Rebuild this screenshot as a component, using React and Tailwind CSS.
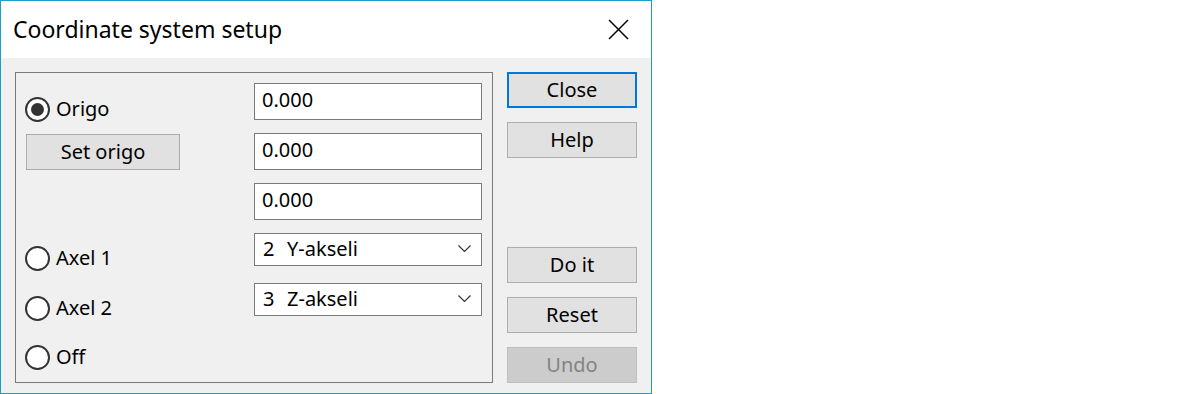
import React from 'react';

const font = { fontFamily: '"Noto Sans", "Open Sans", sans-serif' };

const Radio = ({ checked, label }) => (
  <div className="flex items-center h-[26px]">
    <span className="w-[25px] h-[25px] rounded-full border-2 border-[#333333] bg-white flex items-center justify-center">
      {checked && <span className="w-[13px] h-[13px] rounded-full bg-[#333333]" />}
    </span>
    <span className="ml-[6px] text-[20px] text-black leading-none">{label}</span>
  </div>
);

const Btn = ({ children, primary, disabled, className = '' }) => (
  <button
    className={`w-[130px] h-[36px] text-[20px] leading-none ${
      primary
        ? 'border-2 border-[#0078d7] bg-[#e1e1e1] text-black'
        : disabled
        ? 'border border-[#bfbfbf] bg-[#cccccc] text-[#838383]'
        : 'border border-[#adadad] bg-[#e1e1e1] text-black'
    } ${className}`}
  >
    {children}
  </button>
);

const Field = ({ value, className = '' }) => (
  <div className={`w-[228px] h-[37px] border border-[#7a7a7a] bg-white flex items-center px-[7px] pb-[3px] text-[20px] text-black ${className}`}>
    {value}
  </div>
);

const Select = ({ num, label, className = '' }) => (
  <div className={`w-[228px] h-[33px] border border-[#7a7a7a] bg-white flex items-center pl-[8px] pr-[10px] pb-[1px] text-[20px] text-black ${className}`}>
    <span className="w-[24px]">{num}</span>
    <span className="flex-1">{label}</span>
    <svg width="13" height="8" viewBox="0 0 13 8" fill="none">
      <path d="M0.5 0.5 L6.5 6.5 L12.5 0.5" stroke="#333" strokeWidth="1.2" />
    </svg>
  </div>
);

export default function App() {
  return (
    <div className="w-[1200px] h-[394px] bg-white" style={font}>
      <div className="w-[652px] h-[394px] border border-[#1aa0c8] flex flex-col">
        <div className="h-[57px] bg-white flex items-center justify-between pl-[12px] pr-[22px] shrink-0">
          <span className="text-[23px] text-black">Coordinate system setup</span>
          <svg width="21" height="21" viewBox="0 0 21 21" fill="none">
            <path d="M1 1 L20 20 M20 1 L1 20" stroke="#000" strokeWidth="1.5" />
          </svg>
        </div>
        <div className="flex-1 bg-[#f0f0f0] flex pt-[14px] pl-[14px] pr-[13px]">
          <div className="w-[478px] h-[311px] border border-[#7a7a7a] flex">
            <div className="w-[238px] pl-[9px] flex flex-col">
              <div className="mt-[23px]"><Radio checked label="Origo" /></div>
              <button className="mt-[12px] ml-[1px] w-[154px] h-[36px] border border-[#adadad] bg-[#e1e1e1] text-[20px] text-black leading-none">
                Set origo
              </button>
              <div className="mt-[75px]"><Radio label="Axel 1" /></div>
              <div className="mt-[24px]"><Radio label="Axel 2" /></div>
              <div className="mt-[23px]"><Radio label="Off" /></div>
            </div>
            <div className="flex flex-col pt-[10px]">
              <Field value="0.000" />
              <Field value="0.000" className="mt-[13px]" />
              <Field value="0.000" className="mt-[13px]" />
              <Select num="2" label="Y-akseli" className="mt-[13px]" />
              <Select num="3" label="Z-akseli" className="mt-[17px]" />
            </div>
          </div>
          <div className="ml-[14px] flex flex-col">
            <Btn primary>Close</Btn>
            <Btn className="mt-[14px]">Help</Btn>
            <Btn className="mt-[89px]">Do it</Btn>
            <Btn className="mt-[14px]">Reset</Btn>
            <Btn disabled className="mt-[14px]">Undo</Btn>
          </div>
        </div>
      </div>
    </div>
  );
}
